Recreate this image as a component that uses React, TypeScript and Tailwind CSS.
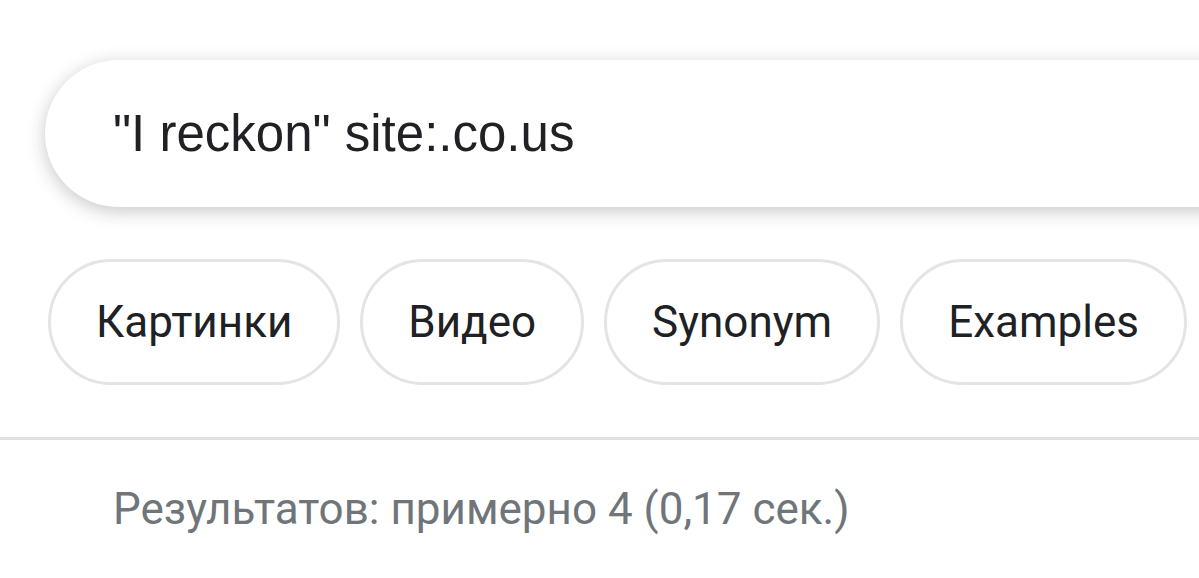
const chips = ['Картинки', 'Видео', 'Synonym', 'Examples']

function Chip({ label }: { label: string }) {
  return (
    <div className="flex h-[126px] shrink-0 items-center rounded-full border-[3px] border-[#e3e4e6] px-[45px] text-[44px] text-[#202124]">
      {label}
    </div>
  )
}

export default function App() {
  return (
    <div className="h-[578px] w-[1199px] overflow-hidden bg-white font-['Roboto',sans-serif]">
      <div className="pl-[45px] pt-[60px]">
        <div className="flex h-[147px] w-[1220px] items-center rounded-l-full bg-white pl-[68px] shadow-[0_4px_18px_rgba(32,33,36,0.25)]">
          <span className="pt-[2px] font-['Liberation_Sans',Arial,sans-serif] text-[51px] text-[#202124]">
            "I reckon" site:.co.us
          </span>
        </div>
      </div>

      <div className="flex gap-[20px] pl-[48px] pt-[52px]">
        {chips.map((c) => (
          <Chip key={c} label={c} />
        ))}
      </div>

      <div className="mt-[52px] h-[3px] w-full bg-[#dfe1e5]" />

      <p className="pl-[113px] pt-[36px] text-[44px] text-[#70757a]">
        Результатов: примерно 4 (0,17 сек.)
      </p>
    </div>
  )
}
